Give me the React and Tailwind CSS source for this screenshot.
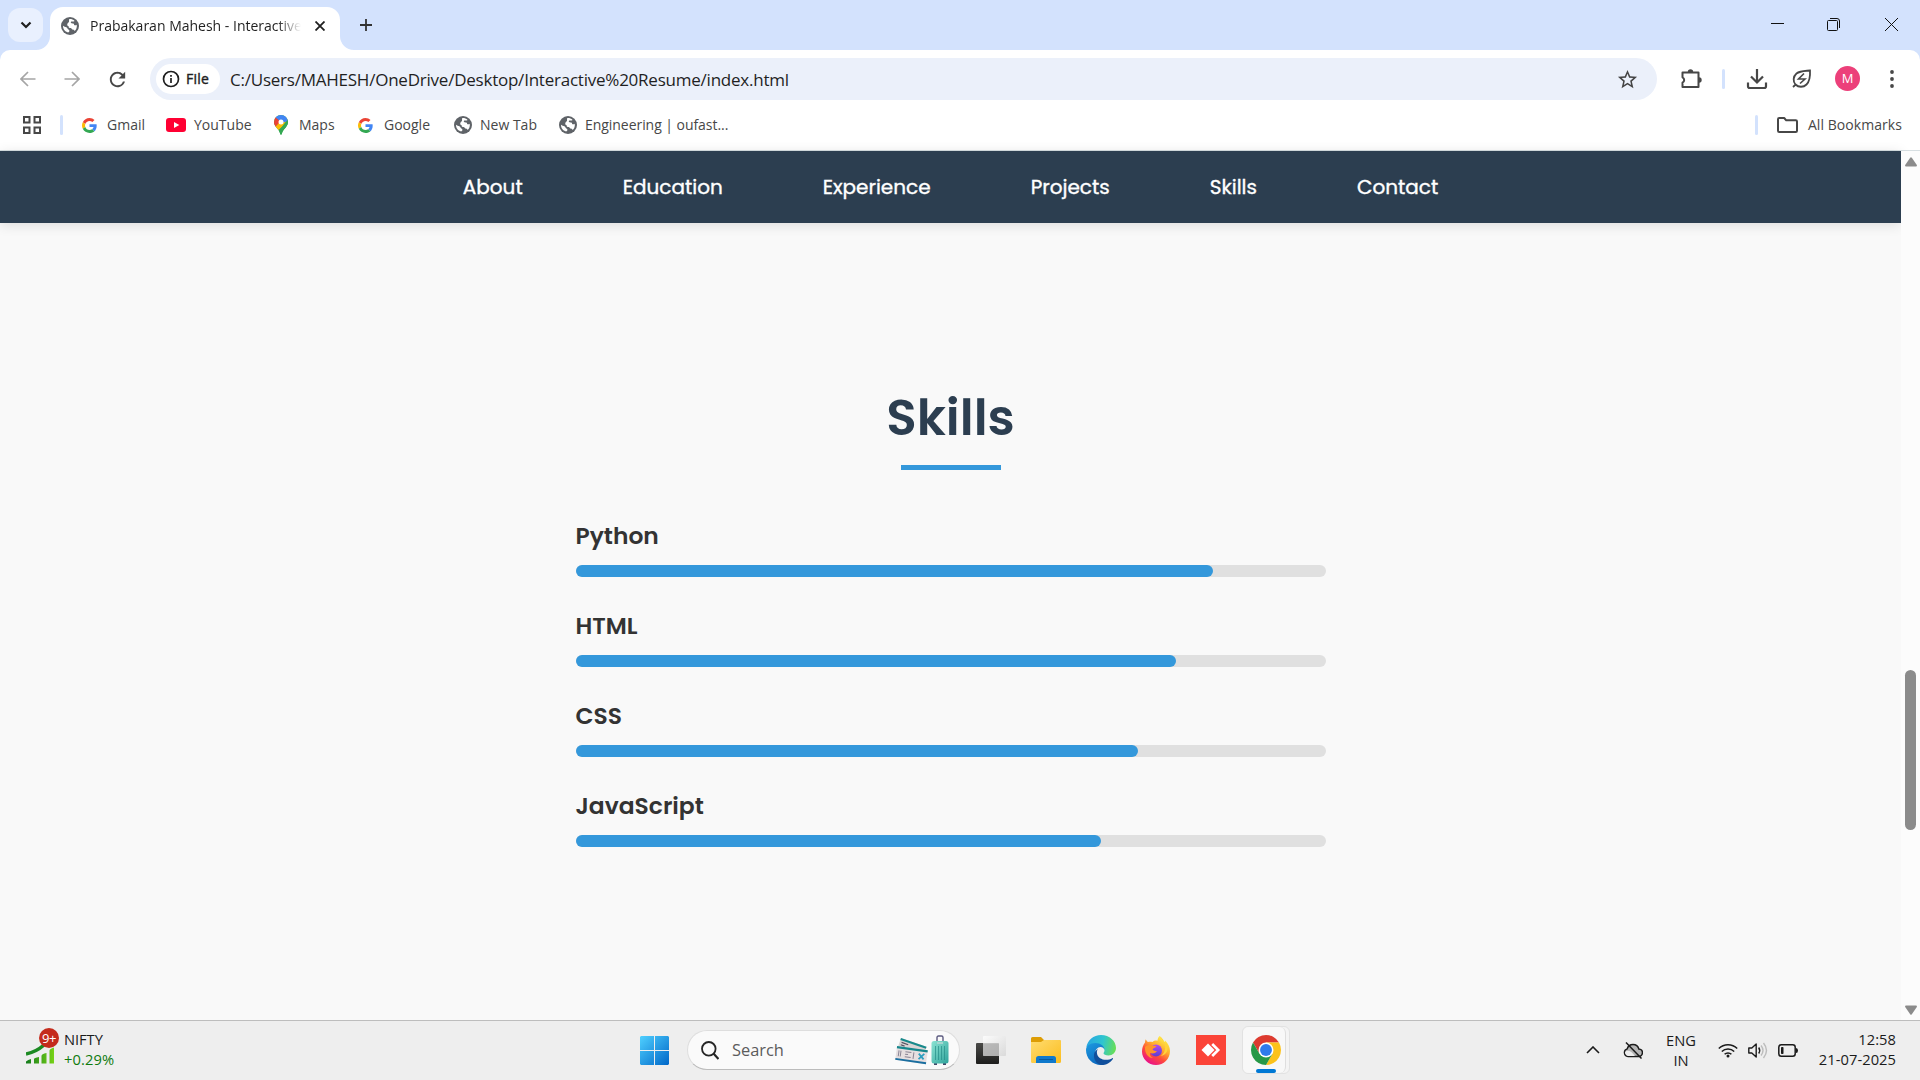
import React from "react";
import { MdRefresh, MdStarBorder } from "react-icons/md";

function Globe() {
  return (
    <svg viewBox="0 0 18 18" className="size-[18px] shrink-0">
      <circle cx="9" cy="9" r="9" fill="#5f6368" />
      <path
        fill="#fff"
        d="M8.300 2.100C10 1.900 12.300 2.600 13.600 3.900c-.8.800-1.900.700-2.800.500-.9 0-1.200.6-.9 1.300.5.700 1.500.6 2.300.7.8.1 1 .8.900 1.600.8.500 1.700.3 2.600-.3.500 2.600-.3 4.800-2 6.300-.5-1.200-1.500-1.500-2.600-1.500-.3-1.100-1.200-1.600-2.300-1.500-1-.2-1.400-1-1.200-1.900C6.500 9 6 8 6.300 6.900 6.800 6 7.700 5.700 8 4.800c.2-.9-.2-1.800.3-2.700zM2 8.700c1 .8 2.300 1 3.400 1.600 1 .6 1.100 1.600 1.900 2.200.9.400 1.300 1 1 2-.2.500-.7.800-1.200.9C4 14.700 1.900 12 2 8.700z"
      />
    </svg>
  );
}

function GoogleG() {
  return (
    <svg viewBox="0 0 48 48" className="size-[15px] shrink-0">
      <path fill="#EA4335" d="M24 9.5c3.54 0 6.71 1.22 9.21 3.6l6.85-6.85C35.9 2.38 30.47 0 24 0 14.62 0 6.51 5.38 2.56 13.22l7.98 6.19C12.43 13.72 17.74 9.5 24 9.5z" />
      <path fill="#4285F4" d="M46.98 24.55c0-1.57-.15-3.09-.38-4.55H24v9.02h12.94c-.58 2.96-2.26 5.48-4.78 7.18l7.73 6c4.51-4.18 7.09-10.36 7.09-17.65z" />
      <path fill="#FBBC05" d="M10.53 28.59c-.48-1.45-.76-2.99-.76-4.59s.27-3.14.76-4.59l-7.98-6.19C.92 16.46 0 20.12 0 24c0 3.88.92 7.54 2.56 10.78l7.97-6.19z" />
      <path fill="#34A853" d="M24 48c6.48 0 11.93-2.13 15.89-5.81l-7.73-6c-2.15 1.45-4.92 2.3-8.16 2.3-6.26 0-11.57-4.22-13.47-9.91l-7.98 6.19C6.51 42.62 14.62 48 24 48z" />
    </svg>
  );
}

function YouTube() {
  return (
    <svg viewBox="0 0 20 14" className="h-3.5 w-5 shrink-0">
      <rect width="20" height="14" rx="3" fill="#ff0033" />
      <path d="M8 4l5.300 3L8 10z" fill="#fff" />
    </svg>
  );
}

function MapsPin() {
  return (
    <svg viewBox="0 0 14 20" className="h-5 w-3.5 shrink-0">
      <defs>
        <clipPath id="pin">
          <path d="M7 0a7 7 0 0 0-7 7c0 2.200.8 3.600 2.300 5.400C4.200 14.600 5.600 16 6.200 19c.2 1.200 1.400 1.200 1.600 0 .6-3 2-4.400 3.900-6.600C13.200 10.600 14 9.200 14 7a7 7 0 0 0-7-7z" />
        </clipPath>
      </defs>
      <g clipPath="url(#pin)">
        <rect width="14" height="20" fill="#34a853" />
        <path d="M-1 1l4 1 4 5-6 6-3-3z" fill="#ea4335" />
        <path d="M1 12.500L9.500 2.500 14 4l-6 8-6 5z" fill="#fbbc04" />
        <path d="M1.600 2.500L6 6l5.500-5L8-1H3z" fill="#4285f4" />
        <path d="M6 6l5-6 4 6-8 2z" fill="#4285f4" />
        <path d="M14 4.500L2 19h12z" fill="#34a853" />
      </g>
      <circle cx="7" cy="7" r="2.500" fill="#fff" />
    </svg>
  );
}

const bookmarks = [
  { label: "Gmail", icon: <GoogleG />, box: "w-[84px] gap-2.5" },
  { label: "YouTube", icon: <YouTube />, box: "w-[108px] gap-2" },
  { label: "Maps", icon: <MapsPin />, box: "w-[84px] gap-[11px]" },
  { label: "Google", icon: <GoogleG />, box: "w-24 gap-[11px]" },
  { label: "New Tab", icon: <Globe />, box: "w-[105px] gap-2" },
  { label: "Engineering | oufast...", icon: <Globe />, box: "gap-2 tracking-[-0.050px]" },
];

const navItems = ["About", "Education", "Experience", "Projects", "Skills", "Contact"];

const skills = [
  { label: "Python", level: 85 },
  { label: "HTML", level: 80 },
  { label: "CSS", level: 75 },
  { label: "JavaScript", level: 70 },
];

function TabStrip() {
  return (
    <div className="flex h-[50px] bg-[#d3e2fd]">
      <div className="ml-2 mt-2 flex h-[34px] w-[35px] items-center justify-center rounded-xl bg-[#e9f0fe]">
        <svg viewBox="0 0 12 8" className="h-2 w-3 fill-none stroke-[#1f1f1f] stroke-[2.200]">
          <path d="M1.500 1.500L6 6l4.500-4.500" />
        </svg>
      </div>
      <div className="relative ml-[7px] mt-[7px] flex h-[43px] w-[290px] items-center rounded-t-[13px] bg-white pb-1.5 pl-[11px]">
        <svg viewBox="0 0 14 14" className="absolute -left-3.5 bottom-0 size-3.5 fill-white">
          <path d="M14 0v14H0A14 14 0 0 0 14 0z" />
        </svg>
        <svg viewBox="0 0 14 14" className="absolute -right-3.5 bottom-0 size-3.5 fill-white">
          <path d="M0 0v14h14A14 14 0 0 1 0 0z" />
        </svg>
        <Globe />
        <span className="ml-[11px] w-[213px] whitespace-nowrap text-sm text-[#1f1f1f] [mask-image:linear-gradient(to_right,black_88%,transparent_99%)]">
          Prabakaran Mahesh - Interactive
        </span>
        <svg viewBox="0 0 10 10" className="ml-3 size-2.5 fill-none stroke-[#1f1f1f] stroke-[1.800]">
          <path d="M.5.5l9 9M9.500.5l-9 9" />
        </svg>
      </div>
      <svg viewBox="0 0 12 12" className="ml-5 mt-[19px] size-3 stroke-[#333] stroke-[1.800]">
        <path d="M6 0v12M0 6h12" />
      </svg>
      <div className="ml-auto mr-[22px] flex h-[50px] text-[#111]">
        <svg viewBox="0 0 13 13" className="mt-[18px] h-[13px] w-[13px] stroke-current">
          <path d="M0 5.500h13" />
        </svg>
        <svg viewBox="0 0 13 13" className="ml-[43px] mt-[18px] h-[13px] w-[13px] fill-none stroke-current">
          <rect x=".5" y="2.500" width="10" height="10" rx="1" />
          <path d="M3 .5h7a2.500 2.500 0 0 1 2.500 2.500v7" />
        </svg>
        <svg viewBox="0 0 13 13" className="ml-[45px] mt-[18px] h-[13px] w-[13px] stroke-current">
          <path d="M0 0l13 13M13 0L0 13" />
        </svg>
      </div>
    </div>
  );
}

function Toolbar() {
  return (
    <div className="bg-[#d3e2fd]">
      <div className="flex h-[58px] items-center rounded-t-[10px] bg-white pl-5">
        <svg viewBox="0 0 16 16" className="size-4 fill-none stroke-[#a5a5a5] stroke-[1.700]">
          <path d="M15.500 8H1.500M8 1L1 8l7 7" />
        </svg>
        <svg viewBox="0 0 16 16" className="ml-7 size-4 fill-none stroke-[#a5a5a5] stroke-[1.700]">
          <path d="M.5 8h14M8 1l7 7-7 7" />
        </svg>
        <MdRefresh className="ml-[26px] size-[23px] text-[#474747]" />
        <div className="ml-[21px] flex h-[42px] w-[1507px] items-center rounded-full bg-[#ebf0fa] pl-1.5">
          <div className="flex h-[30px] w-16 items-center rounded-full bg-white pl-1.5">
            <svg viewBox="0 0 18 18" className="size-[18px] fill-none stroke-[#1f1f1f] stroke-[1.700]">
              <circle cx="9" cy="9" r="7.500" />
              <path d="M9 8v5M9 5v1.800" />
            </svg>
            <span className="ml-1.5 text-sm tracking-[0.2px] text-[#1f1f1f] [-webkit-text-stroke:0.4px_#1f1f1f]">File</span>
          </div>
          <span className="ml-2.5 mt-0.5 whitespace-nowrap text-[17px] tracking-[-0.230px] text-[#1f1f1f]">
            C:/Users/MAHESH/OneDrive/Desktop/Interactive%20Resume/index.html
          </span>
          <MdStarBorder className="ml-auto mr-[18.500px] size-[23px] text-[#444]" />
        </div>
        <svg viewBox="0 0 22 22" className="ml-[23px] size-[22px]">
          <path
            d="M2.500 4.500h16v14.500h-16v-4.300a3 3 0 0 0 0-5.400z"
            className="fill-none stroke-[#474747] stroke-2"
            strokeLinejoin="round"
          />
          <path d="M7.800 4a2.700 2.700 0 0 1 5.400 0zM19 9.300a2.700 2.700 0 0 1 0 5.400z" className="fill-[#474747]" />
        </svg>
        <div className="ml-5 h-5 w-[3px] rounded-full bg-[#d3e2fd]" />
        <svg viewBox="0 0 22 22" className="ml-[21px] size-[22px] fill-none stroke-[#474747] stroke-[2.200]">
          <path d="M11 1v12.500M5 8.500l6 6 6-6M2 14.500v3.800q0 1.700 1.700 1.700h14.600q1.700 0 1.700-1.700v-3.800" />
        </svg>
        <svg viewBox="0 0 20 20" className="ml-6 size-5 fill-none stroke-[#474747] stroke-[1.800]">
          <path d="M1 18l2.700-2.500M3.500 15.500C.8 12.500 1 7.500 4.500 4.500 8 1.700 13 2 18 1.500c.3 5.500 0 10.500-3.500 14-3 3-8 3-11 0z" />
          <path d="M12 4.500L6.500 10h6.500L8 14.500" className="stroke-[1.600]" />
        </svg>
        <div className="mb-px ml-[23px] flex size-[25px] items-center justify-center rounded-full bg-[#ec407a] text-[13px] text-white">M</div>
        <svg viewBox="0 0 4 18" className="ml-[30px] h-[18px] w-1 fill-[#474747]">
          <circle cx="2" cy="2" r="1.900" />
          <circle cx="2" cy="9" r="1.900" />
          <circle cx="2" cy="16" r="1.900" />
        </svg>
      </div>
    </div>
  );
}

function BookmarkBar() {
  return (
    <div className="flex h-[43px] items-center border-b border-[#d7dfe2] bg-white pb-2 pl-[23px] text-sm text-[#474747]">
      <svg viewBox="0 0 18 18" className="size-[18px] fill-none stroke-[#474747] stroke-2">
        <path d="M1 1h5.500v5.500H1zM11.500 1H17v5.500h-5.500zM1 11.500h5.500V17H1zM11.500 11.500H17V17h-5.500z" />
      </svg>
      <div className="mx-[19px] h-5 w-[3px] rounded-full bg-[#d3e2fd]" />
      {bookmarks.map((b, i) => (
        <div key={i} className={`flex items-center whitespace-nowrap ${b.box}`}>
          {b.icon}
          <span>{b.label}</span>
        </div>
      ))}
      <div className="ml-auto h-5 w-[3px] rounded-full bg-[#d3e2fd]" />
      <svg viewBox="0 0 21 16" className="ml-[19px] h-4 w-[21px] fill-none stroke-[#474747] stroke-2" strokeLinejoin="round">
        <path d="M1 2.200Q1 1 2.200 1h5l2 2.300h9.600q1.200 0 1.200 1.200v9.300q0 1.200-1.200 1.200H2.200Q1 15 1 13.800z" />
      </svg>
      <span className="ml-2.5 mr-[18px] whitespace-nowrap tracking-[0.060px]">All Bookmarks</span>
    </div>
  );
}

function Page() {
  return (
    <div className="flex h-[869px] bg-[#f9f9f9]">
      <div className="w-[1901px] font-['Poppins',sans-serif]">
        <nav className="flex h-[72px] justify-center gap-[100px] bg-[#2c3e50] shadow-[0_2px_12px_rgba(0,0,0,0.120)]">
          {navItems.map((label) => (
            <a key={label} className="whitespace-nowrap text-xl leading-[72px] text-white [-webkit-text-stroke:0.35px_white]">
              {label}
            </a>
          ))}
        </nav>
        <section className="flex flex-col items-center pt-[157px]">
          <h2 className="text-[50px] font-semibold leading-[75px] text-[#2c3e50]">Skills</h2>
          <div className="mt-2.5 h-[5px] w-[100px] bg-[#3498db]" />
          <div className="mt-[49px] flex w-[750px] flex-col gap-8">
            {skills.map((s) => (
              <div key={s.label}>
                <div className="text-[23.4px] font-semibold leading-[34px] text-[#333]">{s.label}</div>
                <div className="mt-3 h-3 rounded-full bg-[#e0e0e0]">
                  <div className="h-3 rounded-full bg-[#3498db]" style={{ width: `${s.level}%` }} />
                </div>
              </div>
            ))}
          </div>
        </section>
      </div>
      <div className="flex w-[19px] flex-col items-center bg-[#fcfcfc]">
        <svg viewBox="0 0 12 10" className="mt-1.5 h-2.5 w-3 fill-[#8b8b8b]">
          <path d="M5.200.7q.8-1 1.600 0L11.800 8q.5 1.500-.8 1.500H1Q-.3 9.500.2 8z" />
        </svg>
        <div className="mt-[503px] h-40 w-[11px] rounded-full bg-[#8b8b8b]" />
        <svg viewBox="0 0 12 10" className="mb-[5px] mt-auto h-2.5 w-3 fill-[#8b8b8b]">
          <path d="M5.200 9.300q.8 1 1.600 0L11.800 2Q12.300.5 11 .5H1Q-.3.5.2 2z" />
        </svg>
      </div>
    </div>
  );
}

function StartLogo() {
  return (
    <svg viewBox="0 0 29 29" className="size-[29px]">
      <defs>
        <linearGradient id="win" x1="0" y1="0" x2="29" y2="29" gradientUnits="userSpaceOnUse">
          <stop stopColor="#4fd0ff" />
          <stop offset="1" stopColor="#0067c8" />
        </linearGradient>
      </defs>
      <path fill="url(#win)" d="M1 0h13v14H0V1zM15 0h13l1 1v13H15zM0 15h14v14H1l-1-1zM15 15h14v13l-1 1H15z" />
    </svg>
  );
}

function TravelArt() {
  return (
    <svg viewBox="0 0 54 31" className="h-[31px] w-[54px]">
      <defs>
        <linearGradient id="case" x1="0" y1="0" x2="1" y2="1">
          <stop stopColor="#8be3d3" />
          <stop offset="1" stopColor="#2fa39b" />
        </linearGradient>
      </defs>
      <g transform="rotate(19 6 3)">
        <rect x="6" y="3" width="27" height="12" fill="#d9d5d5" />
        <rect x="6" y="3" width="27" height="2" fill="#178a8c" />
        <path d="M8 7h7M8 9.500h4" stroke="#55505f" strokeWidth="1.200" />
      </g>
      <g transform="rotate(8 2 12)">
        <rect x="2" y="11" width="31" height="14" fill="#e6dfe0" />
        <rect x="2" y="11" width="31" height="2.200" fill="#16878d" />
        <rect x="2" y="23" width="31" height="2" fill="#1b6fa0" />
        <path d="M4.500 15v6M6.500 15v6M11 15.500h6M11 18h3M11 20.500h6M19.500 15v6.500" stroke="#8a8494" />
        <path d="M24.500 15.500l5.500 5M30 15l-5 6" stroke="#2f9fc0" strokeWidth="1.800" />
      </g>
      <path d="M42 7V2.500Q42 1 43.500 1h3Q48 1 48 2.500V7" fill="none" stroke="#5c5b80" strokeWidth="1.400" />
      <rect x="39" y="27" width="3" height="3" fill="#43476a" />
      <rect x="48" y="27" width="3" height="3" fill="#43476a" />
      <rect x="36.500" y="6" width="17" height="22.500" rx="2.500" fill="url(#case)" />
      <path d="M40.500 11v14M43.500 11v14M46.500 11v14M49.500 11v14" stroke="#258d87" strokeOpacity="0.700" />
      <rect x="42" y="7" width="6" height="2" fill="#a7d6d0" />
    </svg>
  );
}

function TaskView() {
  return (
    <svg viewBox="0 0 30 28" className="h-7 w-[30px]">
      <defs>
        <linearGradient id="tv" x1="0" y1="0" x2="0" y2="1">
          <stop stopColor="#4a4a48" />
          <stop offset="1" stopColor="#1d1d1c" />
        </linearGradient>
        <linearGradient id="tv2" x1="0" y1="0" x2="1" y2="1">
          <stop stopColor="#fff" />
          <stop offset="1" stopColor="#d5d5d5" />
        </linearGradient>
      </defs>
      <rect y="7" width="23" height="21" rx="1" fill="url(#tv)" />
      <rect x="7" y="0" width="23" height="20" rx="1" fill="url(#tv2)" fillOpacity="0.800" />
      <rect x="7" y="7.500" width="16" height="12.500" fill="#a9a9a9" fillOpacity="0.600" />
    </svg>
  );
}

function Explorer() {
  return (
    <svg viewBox="0 0 30 26" className="h-[26px] w-[30px]">
      <defs>
        <linearGradient id="fold" x1="0" y1="0" x2="1" y2="1">
          <stop stopColor="#ffdc70" />
          <stop offset="1" stopColor="#fbbd1e" />
        </linearGradient>
      </defs>
      <path d="M0 1.500Q0 0 1.500 0H10l3 3h15q2 0 2 2v8H0z" fill="#dd9d05" />
      <path d="M0 5h10l3-2h15.500Q30 3 30 4.500v20q0 1.500-1.500 1.500h-27Q0 26 0 24.500z" fill="url(#fold)" />
      <path d="M5 26v-4.500Q5 19 7.500 19h15q2.500 0 2.500 2.500V26z" fill="#0f79cc" />
      <path d="M8.500 22.500h13" stroke="#075a9e" strokeWidth="1.200" strokeLinecap="round" />
    </svg>
  );
}

function Edge() {
  return (
    <svg viewBox="0 0 30 30" className="size-[30px]">
      <defs>
        <linearGradient id="eTop" x1="2" y1="8" x2="30" y2="14" gradientUnits="userSpaceOnUse">
          <stop stopColor="#28a9e0" />
          <stop offset=".5" stopColor="#2fc5cf" />
          <stop offset="1" stopColor="#6be04f" />
        </linearGradient>
        <linearGradient id="eLeft" x1="0" y1="10" x2="12" y2="30" gradientUnits="userSpaceOnUse">
          <stop stopColor="#1c97de" />
          <stop offset="1" stopColor="#0b66bd" />
        </linearGradient>
      </defs>
      <path fill="url(#eTop)" d="M.3 12.500C1.500 5 7.500 0 15 0c8.500 0 15 6 15 13 0 4.500-3.500 7.500-7.500 7.500-3 0-5-1-5-2.200 0-.8 1-1.200 1-3 0-3-3.200-5.300-8-5.300-4.500 0-8 1-10.200 2.500z" />
      <path fill="url(#eLeft)" d="M0 15C0 11 4 8 9.500 8c5 0 9 3 9 7-.5-1.800-2-3-4-3-3 0-5.500 3-5.500 7 0 5 4 9.500 9 10.600-1 .3-2 .4-3 .4C6.500 30 0 23.300 0 15z" />
      <path fill="#104f9c" d="M12 14c-1 1.200-1.300 2.700-1 4.500.7 4 4.500 6.300 9 6.300 2.500 0 4.700-.7 6.200-1.600.6-.3 1 .2.700.7C24.500 27.700 20 30 15.500 30 10 29 7.500 24 8 19.500c.3-2.500 2-4.500 4-5.500z" />
    </svg>
  );
}

function Firefox() {
  return (
    <svg viewBox="0 0 28 29" className="h-[29px] w-7">
      <defs>
        <linearGradient id="ff" x1="22" y1="2" x2="6" y2="27" gradientUnits="userSpaceOnUse">
          <stop stopColor="#fff04a" />
          <stop offset=".35" stopColor="#ffb02e" />
          <stop offset=".65" stopColor="#ff4b3a" />
          <stop offset="1" stopColor="#e9108a" />
        </linearGradient>
        <linearGradient id="ffp" x1="0" y1="0" x2="0" y2="1">
          <stop stopColor="#b64bf0" />
          <stop offset="1" stopColor="#5a3ed0" />
        </linearGradient>
      </defs>
      <path fill="url(#ff)" d="M17.500 0c2 1.500 3.700 3.500 4.500 6 .7-.3 1-.6 1-1.500 3 2.500 5 6.500 5 10.500 0 8-6.300 14-14 14S0 23 0 15.500C0 12 1 9 3 6.500c0-1.200.2-2.300.8-3.200C4.200 4.500 5 5.300 6 6c1.500-.5 3-.5 4.500 0 2-2 4-1.500 5-1.300.2-2 .8-3.500 2-4.700z" />
      <circle cx="14" cy="14.500" r="6" fill="url(#ffp)" />
      <path fill="#ff9429" d="M3 11c2-2 4.500-2.500 7-1.500 1.500.5 3 .3 4.500.5-1 2-3.500 2-4 3.500 1 1.500 3 1.500 4.500 1.500-1.500 2.500-4.500 3-7 2-.5 2 1 4 3 5-5 0-8.500-5-8-11z" />
      <path fill="#ffd43b" d="M17.500 0c3 2 5 5 5.500 9 .6 5-1 9-4.500 11 6-1 9-6 6-13.500-.5 1-1 1.500-2 1.500-1-3-3-5-5-8z" />
    </svg>
  );
}

function AnyDesk() {
  return (
    <svg viewBox="0 0 30 30" className="size-[30px]">
      <rect width="30" height="30" fill="#fb4438" />
      <path d="M5.500 15l6.500-6.500 6.500 6.500-6.500 6.500z" fill="#fff" />
      <path d="M16.200 9l6 6-6 6" fill="none" stroke="#fff" strokeWidth="2.600" />
    </svg>
  );
}

function Chrome() {
  return (
    <svg viewBox="2 2 44 44" className="size-[30px] shrink-0">
      <path fill="#dd3b30" d="M4.950 13A22 22 0 0 1 43.050 13H24l-9.530 16.500z" />
      <path fill="#fcc21b" d="M43.050 13A22 22 0 0 1 24 46l9.530-16.500L24 13z" />
      <path fill="#279847" d="M4.950 13A22 22 0 0 0 24 46l9.530-16.500h-19.060z" />
      <circle cx="24" cy="24" r="11" fill="#fff" />
      <circle cx="24" cy="24" r="8.700" fill="#2f7bec" />
    </svg>
  );
}

const apps = [TaskView, Explorer, Edge, Firefox, AnyDesk];

function Taskbar() {
  return (
    <footer className="flex h-[60px] items-center border-t border-[#bdbdbd] bg-[#eeeeee] pb-px text-[14.700px] leading-5 text-[#1b1b1b]">
      <div className="flex w-[640px] items-center pl-[26px]">
        <div className="relative mb-[9px] h-[36px] w-[33px]">
          <svg viewBox="0 0 33 36" className="h-9 w-[33px]">
            <defs>
              <linearGradient id="bars" x1="0" y1="0" x2="1" y2="0">
                <stop stopColor="#127a1c" />
                <stop offset="1" stopColor="#76d216" />
              </linearGradient>
            </defs>
            <path d="M0 33.500q2-2 5-2.500v4.500H0zM8 31q0-1 5-2v6.500H8zM15.500 28q0-2 5-3v10.500h-5zM23.500 22.500q0-1.500 4.500-3v16h-4.500z" fill="url(#bars)" />
            <path d="M0 26q10-2 18-9" fill="none" stroke="#1c8a22" strokeWidth="3.600" />
          </svg>
          <div className="absolute left-[13px] top-0 flex size-5 items-center justify-center rounded-full bg-[#c42b1c] text-[13px] tracking-tight text-white">9+</div>
        </div>
        <div className="ml-[5px] pb-0.5">
          <div className="tracking-[-0.050px]">NIFTY</div>
          <div className="tracking-[0.1px] text-[#0f7b0f]">+0.29%</div>
        </div>
      </div>
      <StartLogo />
      <div className="ml-[18px] flex h-10 w-[273px] items-center rounded-full border border-[#dedede] border-b-[#bcbcbc] bg-[#fafafa] pl-[13px] pr-2.5">
        <svg viewBox="0 0 18 19" className="h-[19px] w-[18px] fill-none stroke-[#252525]">
          <circle cx="7.800" cy="7.800" r="6.800" strokeWidth="1.800" />
          <path d="M12.500 12.500l5 5.500" strokeWidth="2.200" />
        </svg>
        <span className="ml-[13px] text-[16.400px] text-[#5c5c5c]">Search</span>
        <span className="ml-auto"><TravelArt /></span>
      </div>
      <div className="ml-[3px] flex">
        {apps.map((Icon, i) => (
          <span key={i} className="flex w-[55px] items-center justify-center"><Icon /></span>
        ))}
      </div>
      <div className="ml-1 flex h-12 w-12 rounded-md border border-[#e2e2e2] bg-[#f4f4f4]">
        <div className="flex w-[43px] flex-col items-center rounded-md border-r border-[#dedede] bg-[#f8f8f8] pl-1 pt-2">
          <Chrome />
          <div className="mt-1 h-1 w-5 rounded-full bg-[#0078d4]" />
        </div>
      </div>
      <div className="ml-auto flex items-center">
        <svg viewBox="0 0 14 8" className="h-2 w-3.5 fill-none stroke-[#1b1b1b] stroke-[1.600]">
          <path d="M1 7l6-6 6 6" />
        </svg>
        <svg viewBox="0 0 20 17" className="ml-[23px] h-[17px] w-5 fill-none stroke-[#1b1b1b] stroke-[1.500]">
          <path d="M5 14.500h10.500a3.800 3.800 0 0 0 .3-7.600 6 6 0 0 0-11.600 0A3.900 3.900 0 0 0 5 14.500z" fill="#b5b5b5" />
          <path d="M2 10q4-4 10 4H5q-3-1-3-4z" fill="#ededed" stroke="none" />
          <path d="M3 .5l15.500 16" />
        </svg>
        <div className="ml-[21px] w-[34px] pb-px text-center">
          <div>ENG</div>
          <div>IN</div>
        </div>
        <svg viewBox="0 0 20 15" className="ml-5 h-[15px] w-5 fill-none stroke-[#1b1b1b] stroke-[1.500]">
          <path d="M.8 5.500a13 13 0 0 1 18.400 0M3.800 8.500a8.800 8.800 0 0 1 12.400 0M6.600 11.300a4.800 4.800 0 0 1 6.800 0" />
          <circle cx="10" cy="13" r="1.500" fill="#1b1b1b" stroke="none" />
        </svg>
        <svg viewBox="0 0 20 17" className="ml-2.5 h-[17px] w-5 fill-none stroke-[#1b1b1b] stroke-[1.400]">
          <path d="M.8 6v5h3l4.400 4V2L3.800 6z" strokeLinejoin="round" />
          <path d="M10.700 5.500q2 3 0 6" />
          <path d="M13 3.500q4 5 0 10M15.500 1q6 7.500 0 15" stroke="#bcbcbc" />
        </svg>
        <svg viewBox="0 0 20 13" className="ml-2.5 h-[13px] w-5">
          <rect x=".8" y=".8" width="16.400" height="11.400" rx="2.500" fill="none" stroke="#1b1b1b" strokeWidth="1.500" />
          <rect x="3" y="3" width="2.500" height="7" rx=".8" fill="#1b1b1b" />
          <path d="M18 4q2 0 2 2.500T18 9z" fill="#1b1b1b" />
        </svg>
        <div className="mr-6 w-[98px] pb-0.5 text-right tracking-[0.050px]">
          <div>12:58</div>
          <div>21-07-2025</div>
        </div>
      </div>
    </footer>
  );
}

export default function App() {
  return (
    <div className="h-[1080px] w-[1920px] overflow-hidden bg-white font-['Segoe_UI','Open_Sans',sans-serif]">
      <TabStrip />
      <Toolbar />
      <BookmarkBar />
      <Page />
      <Taskbar />
    </div>
  );
}
